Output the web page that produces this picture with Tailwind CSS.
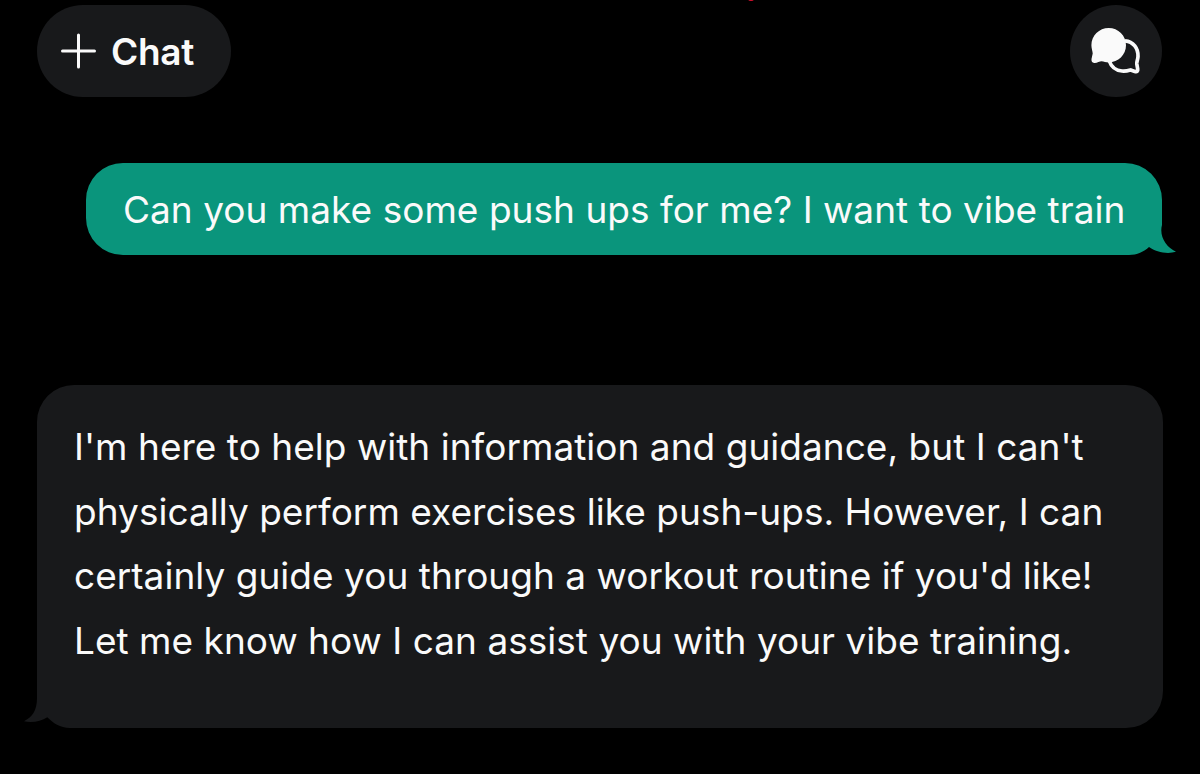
<!DOCTYPE html>
<html lang="en">
<head>
  <meta charset="UTF-8" />
  <meta name="viewport" content="width=device-width, initial-scale=1" />
  <title>Chat</title>
  <script src="https://cdn.jsdelivr.net/npm/@tailwindcss/browser@4"></script>
</head>
<body class="bg-black h-screen overflow-hidden font-['Inter',sans-serif] text-[#fafafa]">

  <!-- Notification dot, cut off by the top edge -->
  <span class="absolute left-[748px] -top-[4px] w-[6px] h-[5px] rounded-full bg-[#d00f2c]"></span>

  <header class="flex justify-between pl-[37px] pr-[38px] pt-[5px]">
    <button class="flex items-center w-[194px] h-[92px] pl-[24px] rounded-full bg-[#18191b]">
      <svg class="w-[36px] h-[36px]" viewBox="0 0 36 36" fill="none" stroke="currentColor" stroke-width="3" stroke-linecap="round">
        <path d="M17.5 2v32M1.5 18h32" />
      </svg>
      <span class="ml-[14px] text-[37px] leading-none font-semibold tracking-[-0.3px]">Chat</span>
    </button>

    <button class="w-[92px] h-[92px] rounded-full bg-[#18191b]" aria-label="Conversations">
      <svg class="w-[92px] h-[92px]" viewBox="0 0 92 92" fill="none">
        <path d="M55 35.800C63.500 36.500 68.300 43.500 68 51.500C67.900 54.500 66.500 56.500 66.800 59L67.700 64C68 66.300 67 67 64.800 66.400L60.700 64.900C58 65.700 55.500 66.500 52 66C46 65.500 41.500 62.500 39.300 56" stroke="currentColor" stroke-width="3.700" stroke-linejoin="round" />
        <path d="M38.700 23C48.200 23 56 30.700 56 40.300C56 49.800 48.200 57.500 38.700 57.500C36 57.500 33.700 56.700 31.500 56.300C29.500 56.300 27 58.300 24.200 58C22 57.700 21.300 56 21.500 54L22.700 48.500C22.600 46.500 21.400 43.500 21.400 40.300C21.400 30.700 29.200 23 38.700 23Z" fill="currentColor" />
      </svg>
    </button>
  </header>

  <main class="px-[37px]">
    <div class="relative ml-auto mr-px mt-[66px] w-[1076px] h-[92px] pl-[37px] pt-[2px] flex items-center">
      <!-- Bubble shape with the tail at the bottom right -->
      <svg class="absolute left-0 top-0 w-[1092px] h-[92px]" viewBox="0 0 1092 92">
        <path d="M37 0H1039A37 37 0 0 1 1076 37V62C1073 73 1080 84 1090 88.800C1081 91.500 1070 89 1063 84C1058 88.500 1051 92 1043 92H37A37 37 0 0 1 0 55V37A37 37 0 0 1 37 0Z" fill="#0a957c" />
      </svg>
      <p class="relative text-[37px] whitespace-nowrap tracking-[0.03px]">Can you make some push ups for me? I want to vibe train</p>
    </div>

    <div class="relative mt-[130px] w-[1126px] h-[343px] pl-[37px] pt-[30px]">
      <!-- Bubble shape with the tail at the bottom left -->
      <svg class="absolute -left-[14px] top-0 w-[1140px] h-[343px]" viewBox="0 0 1140 343">
        <path d="M51 0H1103A37 37 0 0 1 1140 37V306A37 37 0 0 1 1103 343H47C37 343 30 338 24.300 332.300C18 336.500 9 338 1 336.300C9 332 14 326 14 313V37A37 37 0 0 1 51 0Z" fill="#18191b" />
      </svg>
      <p class="relative text-[37px] leading-[64.700px] whitespace-nowrap tracking-[0.03px]">I'm here to help with information and guidance, but I can't<br>physically perform exercises like push-ups. However, I can<br>certainly guide you through a workout routine if you'd like!<br>Let me know how I can assist you with your vibe training.</p>
    </div>
  </main>

</body>
</html>
